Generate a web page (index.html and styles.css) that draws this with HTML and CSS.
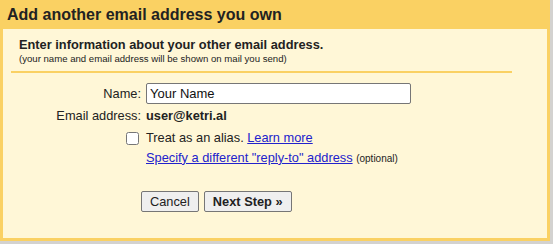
FILE: index.html
```html
<!DOCTYPE html>
<html lang="en">
<head>
    <meta charset="UTF-8">
    <title>Add another email address you own</title>
    <link rel="stylesheet" href="styles.css">
</head>
<body>
    <div class="dialog">
        <div class="dialog-title">Add another email address you own</div>
        <div class="dialog-body">
            <div class="intro">
                <div class="intro-head">Enter information about your other email address.</div>
                <div class="intro-note">(your name and email address will be shown on mail you send)</div>
            </div>
            <form class="form" action="#" method="get">
                <label class="label" for="name">Name:</label>
                <div class="value"><input type="text" id="name" class="text-input" value="Your Name"></div>

                <div class="label">Email address:</div>
                <div class="value address">user@ketri.al</div>

                <div class="label"><input type="checkbox" id="alias" class="check"></div>
                <div class="value"><label for="alias">Treat as an alias.</label> <a href="#">Learn more</a></div>

                <div class="label"></div>
                <div class="value"><a href="#">Specify a different "reply-to" address</a> <span class="small">(optional)</span></div>

                <div class="buttons">
                    <button type="button" class="btn">Cancel</button>
                    <button type="submit" class="btn btn-main">Next Step &raquo;</button>
                </div>
            </form>
        </div>
    </div>
</body>
</html>
```

FILE: styles.css
```css
body, html {
    margin: 0;
    height: 100%;
    background: #d3d2d0;
    font-family: "Liberation Sans", Arial, sans-serif;
    color: #222;
}

.dialog {
    width: 550px;
    height: 241px;
    box-sizing: border-box;
    background: #fad163;
    border: 3px solid #fad163;
    border-top: none;
    display: flex;
    flex-direction: column;
}

.dialog-title {
    height: 28px;
    line-height: 28px;
    padding: 1px 0 0 4px;
    font-size: 16px;
    font-weight: bold;
}

.dialog-body {
    flex: 1;
    background: #fff7d7;
}

.intro {
    margin: 0 35px 0 8px;
    padding: 8px 0 6px 8px;
    border-bottom: 2px solid #fad163;
}

.intro-head {
    font-size: 12.8px;
    font-weight: bold;
    line-height: 15px;
}

.intro-note {
    font-size: 9.6px;
    line-height: 13px;
}

.form {
    display: grid;
    grid-template-columns: 138px 1fr;
    grid-template-rows: 22px 22px 22px 18px;
    column-gap: 5px;
    align-items: center;
    padding-top: 9px;
    font-size: 12.8px;
}

.label {
    text-align: right;
}

.address {
    font-weight: bold;
}

.text-input {
    display: block;
    width: 265px;
    height: 21px;
    box-sizing: border-box;
    margin: 0;
    padding: 1px 3px;
    border: 1px solid #767676;
    border-radius: 2px;
    background: #fff;
    font-family: "Liberation Sans", Arial, sans-serif;
    font-size: 13px;
    color: #111;
}

.check {
    width: 13px;
    height: 13px;
    margin: 0 2px 0 0;
    vertical-align: middle;
}

a {
    color: #2222cc;
}

.small {
    font-size: 10px;
}

.buttons {
    grid-column: 1 / 3;
    display: flex;
    gap: 5px;
    padding: 25px 0 0 138px;
}

.btn {
    height: 21px;
    margin: 0;
    padding: 0 8px;
    border: 1px solid #767676;
    border-radius: 2px;
    background: #efefef;
    font-family: "Liberation Sans", Arial, sans-serif;
    font-size: 12.8px;
    color: #222;
}

.btn-main {
    font-weight: bold;
}
```
